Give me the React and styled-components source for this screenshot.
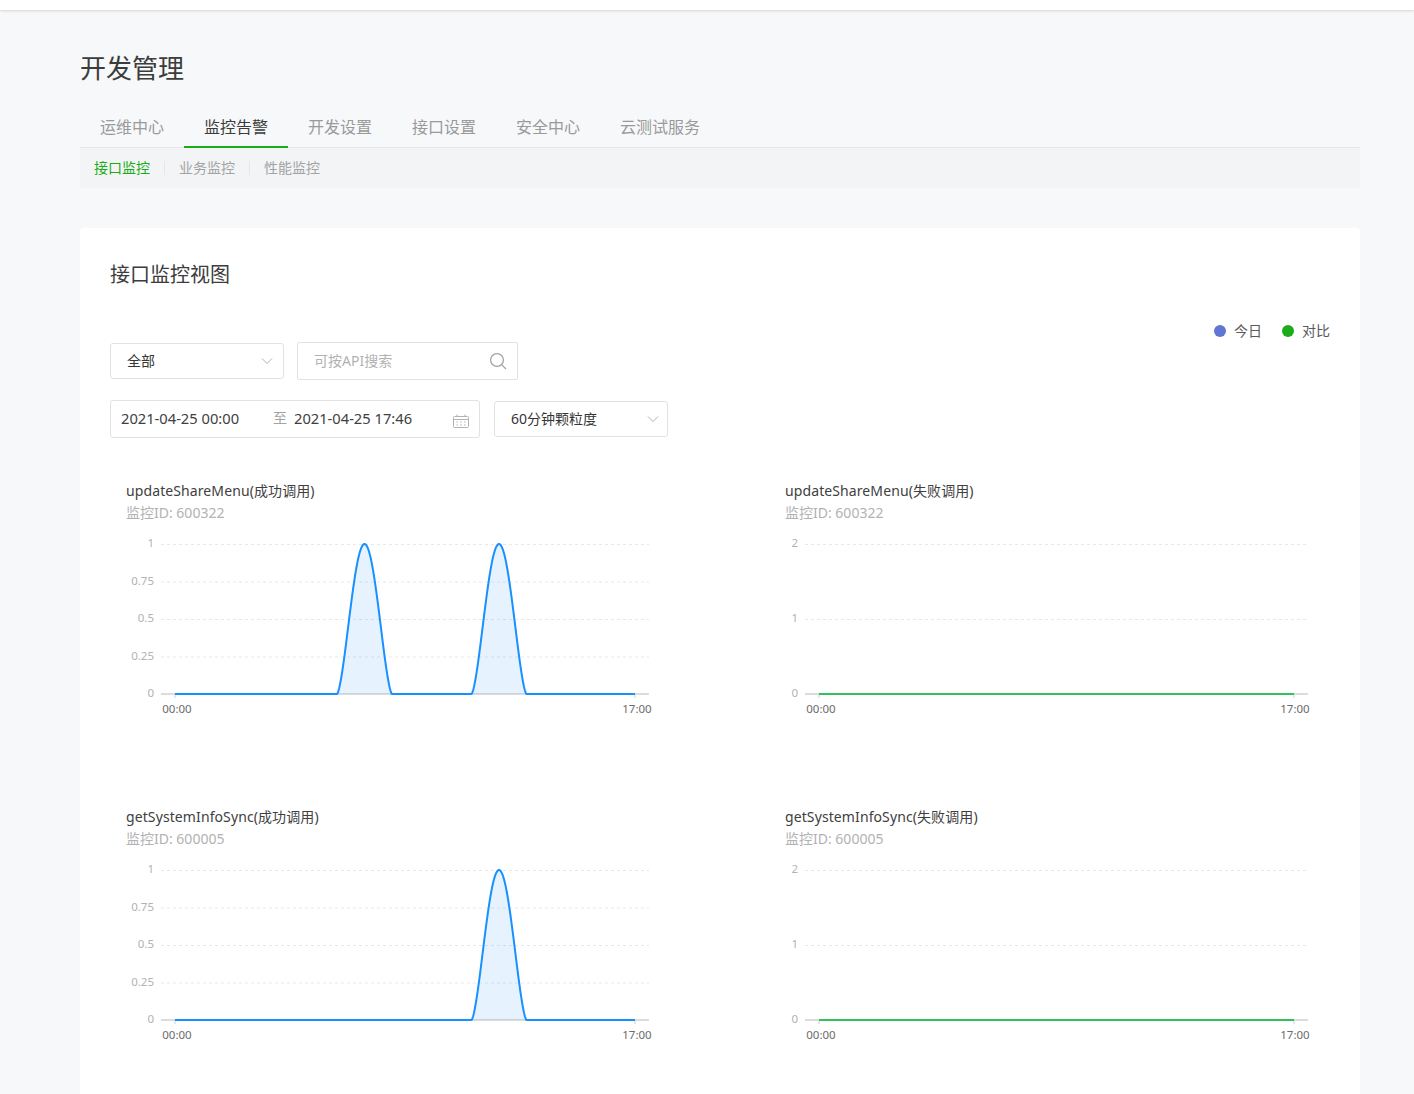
import React from 'react'
import styled, { createGlobalStyle } from 'styled-components'

const GlobalStyle = createGlobalStyle`
  html, body {
    margin: 0;
    padding: 0;
    height: 1094px;
    overflow: hidden;
    background: #f6f8f9;
    font-family: "Noto Sans", "Noto Sans CJK SC", sans-serif;
  }
  * { box-sizing: border-box; }
`

const TopBar = styled.div`
  height: 10px;
  background: #fff;
  box-shadow: 0 1px 3px rgba(0, 0, 0, 0.14);
`

const Page = styled.div`
  padding: 0 54px 0 80px;
`

const Title = styled.h1`
  margin: 0;
  padding-top: 39px;
  height: 96px;
  font-size: 26px;
  line-height: 38px;
  font-weight: 400;
  color: #3c3c3c;
`

const Tabs = styled.div`
  display: flex;
  height: 42px;
  border-bottom: 1px solid #e7e7e7;
`

const Tab = styled.div`
  flex: none;
  height: 42px;
  padding: 9px 20px 0;
  font-size: 16px;
  line-height: 24px;
  color: ${p => (p.$active ? '#3c3c3c' : '#9a9a9a')};
  border-bottom: 2px solid ${p => (p.$active ? '#1aad19' : 'transparent')};
`

const SubNav = styled.div`
  display: flex;
  align-items: center;
  height: 40px;
  padding-left: 14px;
  background: #f3f4f6;
`

const SubItem = styled.div`
  font-size: 14px;
  line-height: 14px;
  padding: 0 14px 0 14px;
  color: ${p => (p.$active ? '#1aad19' : '#a3a3a3')};
  border-left: 1px solid ${p => (p.$first ? 'transparent' : '#e7e7e7')};
  ${p => p.$first && 'padding-left: 0; border-left: 0;'}
`

const Card = styled.div`
  margin-top: 40px;
  height: 900px;
  padding: 30px;
  background: #fff;
  border-radius: 4px;
`

const CardTitle = styled.h2`
  margin: 0;
  padding-top: 1px;
  font-size: 20px;
  line-height: 32px;
  font-weight: 400;
  color: #3c3c3c;
`

const Legend = styled.div`
  display: flex;
  justify-content: flex-end;
  gap: 20px;
  margin-top: 30px;
  height: 20px;
`

const LegendItem = styled.div`
  display: flex;
  align-items: center;
  gap: 8px;
  font-size: 14px;
  line-height: 20px;
  color: #5a5a5a;
`

const Dot = styled.span`
  width: 12px;
  height: 12px;
  border-radius: 50%;
  background: ${p => p.$color};
`

const FilterRow = styled.div`
  display: flex;
  align-items: center;
  gap: ${p => p.$gap}px;
  height: 38px;
  margin-top: ${p => p.$top}px;
`

const Select = styled.div`
  display: flex;
  align-items: center;
  justify-content: space-between;
  width: 174px;
  height: 36px;
  padding: 0 ${p => p.$right}px 0 16px;
  background: #fff;
  border: 1px solid #e2e2e2;
  border-radius: 3px;
  font-size: 14px;
  line-height: 32px;
  color: #353535;
`

const SearchBox = styled.div`
  display: flex;
  align-items: center;
  justify-content: space-between;
  width: 221px;
  height: 38px;
  padding: 0 10px 0 16px;
  border: 1px solid #e2e2e2;
  border-radius: 2px;
  font-size: 14px;
  line-height: 34px;
  color: #b2b2b2;
`

const DateBox = styled.div`
  display: flex;
  align-items: center;
  width: 370px;
  height: 38px;
  padding: 0 10px 2px;
  border: 1px solid #e2e2e2;
  border-radius: 3px;
  font-size: 14.7px;
  line-height: 32px;
  color: #404040;
`

const DateText = styled.span`
  flex: none;
  width: ${p => p.$w}px;
`

const DateSep = styled.span`
  flex: none;
  width: 21px;
  font-size: 14px;
  color: #a3a3a3;
`

const CalendarIcon = styled.svg`
  flex: none;
  margin-left: auto;
  margin-top: 5px;
`

const ChartGrid = styled.div`
  display: grid;
  grid-template-columns: 659px 561px;
  grid-auto-rows: 326px;
  margin-top: 42px;
`

const ChartCell = styled.div`
  display: flex;
  flex-direction: column;
`

const ChartName = styled.div`
  padding-left: 16px;
  font-size: 14px;
  line-height: 22px;
  letter-spacing: 0.1px;
  color: #404040;
`

const ChartId = styled.div`
  padding-left: 16px;
  font-size: 14px;
  line-height: 22px;
  color: #b2b2b2;
`

const Plot = styled.svg`
  display: block;
  margin-top: 6px;
  font-family: "Noto Sans", "Noto Sans CJK SC", sans-serif;
  font-size: 11.5px;
`

const Chevron = () => (
  <svg width="12" height="12" viewBox="0 0 12 12" fill="none">
    <path d="M1 3.5 L6 8.5 L11 3.5" stroke="#b2b2b2" strokeWidth="1" />
  </svg>
)

// y positions inside the plot are measured from its top edge
const TOP = 14
const BOTTOM = 164

function bell(cx, half = 27.5) {
  const pts = []
  for (let i = -half; i <= half; i += 0.5) {
    const v = Math.pow(Math.max(Math.cos((Math.PI * i) / (2 * half)), 0), 1.55)
    pts.push([cx + i, BOTTOM - (BOTTOM - TOP) * v])
  }
  return pts
}

const toPath = pts => pts.map((p, i) => `${i ? 'L' : 'M'}${p[0].toFixed(1)} ${p[1].toFixed(1)}`).join(' ')

const LineChart = ({ width, ticks, gridFrom, gridTo, dataFrom, dataTo, peaks = [], color, endLabelX }) => {
  const linePts = [[dataFrom, BOTTOM]]
  peaks.forEach(cx => linePts.push(...bell(cx)))
  linePts.push([dataTo, BOTTOM])
  return (
    <Plot width={width} height="200" viewBox={`0 0 ${width} 200`}>
      {ticks.slice(0, -1).map((t, i) => {
        const y = TOP + ((BOTTOM - TOP) * i) / (ticks.length - 1)
        return (
          <line key={t} x1={gridFrom} x2={gridTo} y1={y + 0.5} y2={y + 0.5} stroke="#e8e8e8" strokeDasharray="3 3" />
        )
      })}
      {ticks.map((t, i) => {
        const y = TOP + ((BOTTOM - TOP) * i) / (ticks.length - 1)
        return (
          <text key={t} x={gridFrom - 7} y={y + 3} textAnchor="end" fill="#b2b2b2">
            {t}
          </text>
        )
      })}
      <line x1={gridFrom} x2={gridTo} y1={BOTTOM} y2={BOTTOM} stroke="#dcdcdc" strokeWidth="2" />
      <line x1={dataFrom} x2={dataFrom} y1={BOTTOM} y2={BOTTOM + 4} stroke="#cfcfcf" />
      <line x1={dataTo} x2={dataTo} y1={BOTTOM} y2={BOTTOM + 4} stroke="#cfcfcf" />
      {peaks.map(cx => (
        <path key={cx} d={`${toPath(bell(cx))} Z`} fill="#1890ff" fillOpacity="0.11" />
      ))}
      <path d={toPath(linePts)} fill="none" stroke={color} strokeWidth="2" strokeLinejoin="round" />
      <text x={dataFrom + 2} y={BOTTOM + 19} textAnchor="middle" fill="#6b6b6b">00:00</text>
      <text x={endLabelX} y={BOTTOM + 19} textAnchor="middle" fill="#6b6b6b">17:00</text>
    </Plot>
  )
}

const charts = [
  {
    name: 'updateShareMenu(成功调用)', id: '600322', ticks: ['1', '0.75', '0.5', '0.25', '0'],
    gridFrom: 51, gridTo: 539, dataFrom: 65, dataTo: 525, peaks: [254.5, 389], color: '#1890ff', endLabelX: 527, width: 560,
  },
  {
    name: 'updateShareMenu(失败调用)', id: '600322', ticks: ['2', '1', '0'],
    gridFrom: 36, gridTo: 539, dataFrom: 50, dataTo: 525, peaks: [], color: '#2fc25b', endLabelX: 526, width: 561,
  },
  {
    name: 'getSystemInfoSync(成功调用)', id: '600005', ticks: ['1', '0.75', '0.5', '0.25', '0'],
    gridFrom: 51, gridTo: 539, dataFrom: 65, dataTo: 525, peaks: [389], color: '#1890ff', endLabelX: 527, width: 560,
  },
  {
    name: 'getSystemInfoSync(失败调用)', id: '600005', ticks: ['2', '1', '0'],
    gridFrom: 36, gridTo: 539, dataFrom: 50, dataTo: 525, peaks: [], color: '#2fc25b', endLabelX: 526, width: 561,
  },
]

const tabs = ['运维中心', '监控告警', '开发设置', '接口设置', '安全中心', '云测试服务']

const App = () => (
  <>
    <GlobalStyle />
    <TopBar />
    <Page>
      <Title>开发管理</Title>
      <Tabs>
        {tabs.map(t => (
          <Tab key={t} $active={t === '监控告警'}>{t}</Tab>
        ))}
      </Tabs>
      <SubNav>
        <SubItem $first $active>接口监控</SubItem>
        <SubItem>业务监控</SubItem>
        <SubItem>性能监控</SubItem>
      </SubNav>
      <Card>
        <CardTitle>接口监控视图</CardTitle>
        <Legend>
          <LegendItem><Dot $color="#5f77d3" />今日</LegendItem>
          <LegendItem><Dot $color="#1aad19" />对比</LegendItem>
        </Legend>
        <FilterRow $gap={13} $top={1}>
          <Select $right={10}>全部<Chevron /></Select>
          <SearchBox>
            可按API搜索
            <svg width="18" height="18" viewBox="0 0 18 18" fill="none" stroke="#a3a3a3" strokeWidth="1.3">
              <circle cx="8" cy="8" r="6.4" />
              <path d="M12.6 12.6 L17 17" />
            </svg>
          </SearchBox>
        </FilterRow>
        <FilterRow $gap={14} $top={20}>
          <DateBox>
            <DateText $w={152}>2021-04-25 00:00</DateText>
            <DateSep>至</DateSep>
            <DateText $w={130}>2021-04-25 17:46</DateText>
            <CalendarIcon width="16" height="14" viewBox="0 0 16 14" fill="none" stroke="#b2b2b2">
              <rect x="0.5" y="2.5" width="15" height="11" rx="1" />
              <path d="M4 0.5 V3 M12 0.5 V3 M0.5 5.5 H15.5" />
              <path d="M3.5 8 H5 M7.2 8 H8.8 M11 8 H12.5 M3.5 11 H5 M7.2 11 H8.8 M11 11 H12.5" />
            </CalendarIcon>
          </DateBox>
          <Select $right={8}>60分钟颗粒度<Chevron /></Select>
        </FilterRow>
        <ChartGrid>
          {charts.map(c => (
            <ChartCell key={c.name}>
              <ChartName>{c.name}</ChartName>
              <ChartId>监控ID: {c.id}</ChartId>
              <LineChart {...c} />
            </ChartCell>
          ))}
        </ChartGrid>
      </Card>
    </Page>
  </>
)

export default App
